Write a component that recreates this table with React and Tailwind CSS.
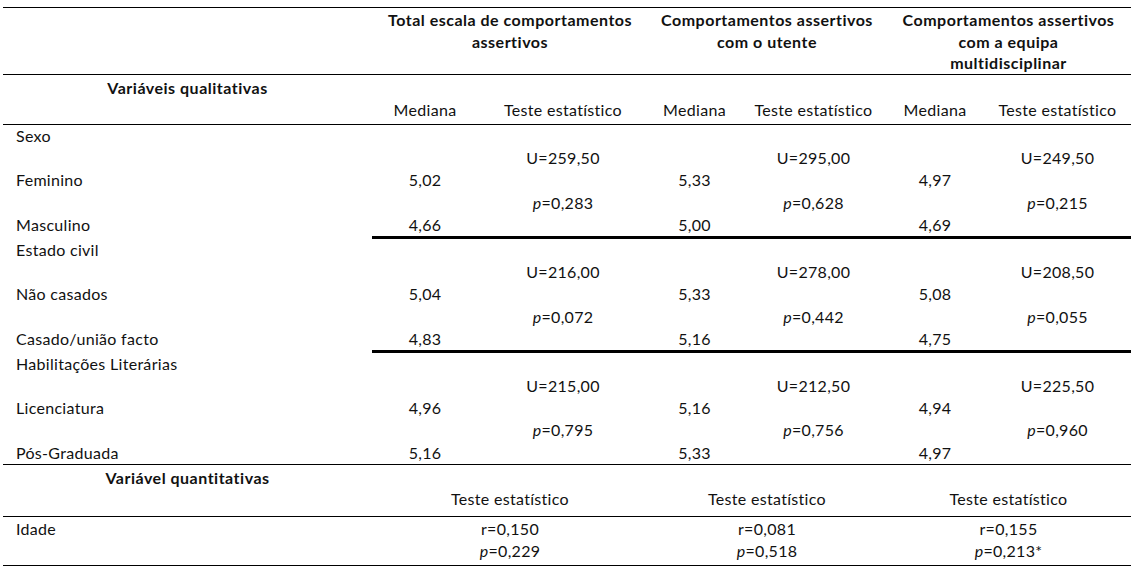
import React from 'react';

const COLS = 'grid grid-cols-[369px_106px_170px_93px_145px_98px_147px]';

const sections = [
  {
    title: 'Sexo',
    rows: [
      { label: 'Feminino', med: ['5,02', '5,33', '4,97'] },
      { label: 'Masculino', med: ['4,66', '5,00', '4,69'] },
    ],
    u: ['259,50', '295,00', '249,50'],
    p: ['0,283', '0,628', '0,215'],
    thick: true,
  },
  {
    title: 'Estado civil',
    rows: [
      { label: 'Não casados', med: ['5,04', '5,33', '5,08'] },
      { label: 'Casado/união facto', med: ['4,83', '5,16', '4,75'] },
    ],
    u: ['216,00', '278,00', '208,50'],
    p: ['0,072', '0,442', '0,055'],
    thick: true,
  },
  {
    title: 'Habilitações Literárias',
    rows: [
      { label: 'Licenciatura', med: ['4,96', '5,16', '4,94'] },
      { label: 'Pós-Graduada', med: ['5,16', '5,33', '4,97'] },
    ],
    u: ['215,00', '212,50', '225,50'],
    p: ['0,795', '0,756', '0,960'],
    thick: false,
  },
];

const quant = [
  { r: '0,150', p: '0,229' },
  { r: '0,081', p: '0,518' },
  { r: '0,155', p: '0,213*' },
];

// uma linha da secção: rótulo + (mediana, teste) x3
const Row = ({ label, med, test }) => (
  <>
    <div className="pl-[13px]">{label}</div>
    {[0, 1, 2].map((i) => (
      <React.Fragment key={i}>
        <div className="text-center">{med ? med[i] : ''}</div>
        <div className="text-center">{test ? test[i] : ''}</div>
      </React.Fragment>
    ))}
  </>
);

const PVal = ({ v }) => (
  <span>
    <i>p</i>={v}
  </span>
);

const Section = ({ s }) => (
  <div
    className={`${COLS} leading-[22.2px] ${
      s.thick ? 'grid-rows-[repeat(5,22.2px)_3px]' : 'grid-rows-[repeat(5,22.2px)]'
    }`}
  >
    <Row label={s.title} />
    <Row test={s.u.map((u) => `U=${u}`)} />
    <Row label={s.rows[0].label} med={s.rows[0].med} />
    <Row test={s.p.map((p, i) => <PVal key={i} v={p} />)} />
    <Row label={s.rows[1].label} med={s.rows[1].med} />
    {s.thick && <div className="col-start-2 col-span-6 h-[3px] bg-black" />}
  </div>
);

export default function App() {
  return (
    <div
      className="bg-white w-[1136px] h-[571px] overflow-hidden pt-[7px] pl-[3px] text-[16px] tracking-[0.3px] text-[#111]"
      style={{ fontFamily: 'Lato, "Open Sans", sans-serif' }}
    >
      <div className="w-[1128px]">
        {/* cabeçalho */}
        <div className={`${COLS} border-t border-black h-[67px] pt-[1px] leading-[21.5px] font-bold tracking-[0.5px]`}>
          <div />
          <div className="col-span-2 text-center">
            Total escala de comportamentos
            <br />
            assertivos
          </div>
          <div className="col-span-2 text-center">
            Comportamentos assertivos
            <br />
            com o utente
          </div>
          <div className="col-span-2 text-center">
            Comportamentos assertivos
            <br />
            com a equipa
            <br />
            multidisciplinar
          </div>
        </div>

        <div className={`${COLS} border-t border-black h-[50px] pt-[2px] grid-rows-[22px_22px] leading-[22px]`}>
          <div className="text-center font-bold tracking-[0.5px]">Variáveis qualitativas</div>
          <div className="col-span-6" />
          <div />
          {[0, 1, 2].map((i) => (
            <React.Fragment key={i}>
              <div className="text-center">Mediana</div>
              <div className="text-center">Teste estatístico</div>
            </React.Fragment>
          ))}
        </div>

        <div className="border-t border-black">
          {sections.map((s) => (
            <Section key={s.title} s={s} />
          ))}
        </div>

        <div className={`${COLS} border-t border-black h-[52px] pt-[2px] grid-rows-[21px_21px] leading-[21px]`}>
          <div className="text-center font-bold tracking-[0.5px]">Variável quantitativas</div>
          <div className="col-span-6" />
          <div />
          {quant.map((q, i) => (
            <div key={i} className="col-span-2 text-center">Teste estatístico</div>
          ))}
        </div>

        <div className={`${COLS} border-t border-b border-black h-[50px] pt-[1px] grid-rows-[22px_22px] leading-[22px]`}>
          <div className="pl-[13px]">Idade</div>
          {quant.map((q, i) => (
            <div key={i} className="col-span-2 text-center">r={q.r}</div>
          ))}
          <div />
          {quant.map((q, i) => (
            <div key={i} className="col-span-2 text-center">
              <PVal v={q.p} />
            </div>
          ))}
        </div>
      </div>
    </div>
  );
}
